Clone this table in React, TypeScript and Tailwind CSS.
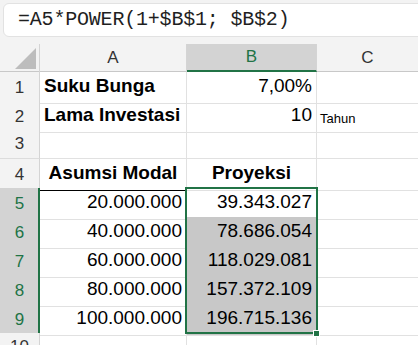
import React from "react";

const GREEN = "#217346";

const rows = [
  { n: 1, a: "Suku Bunga", aBold: true, b: "7,00%", c: "" },
  { n: 2, a: "Lama Investasi", aBold: true, b: "10", c: "Tahun" },
  { n: 3, a: "", b: "", c: "" },
  { n: 4, a: "Asumsi Modal", aBold: true, aCenter: true, b: "Proyeksi", bBold: true, bCenter: true, c: "" },
  { n: 5, a: "20.000.000", b: "39.343.027", c: "" },
  { n: 6, a: "40.000.000", b: "78.686.054", c: "", fill: true },
  { n: 7, a: "60.000.000", b: "118.029.081", c: "", fill: true },
  { n: 8, a: "80.000.000", b: "157.372.109", c: "", fill: true },
  { n: 9, a: "100.000.000", b: "196.715.136", c: "", fill: true },
  { n: 10, a: "", b: "", c: "" },
];

const cellFont = { fontFamily: '"Liberation Sans", Arial, sans-serif' };

export default function App() {
  return (
    <div className="w-[418px] h-[345px] overflow-hidden bg-[#f3f3f3]" style={cellFont}>
      {/* formula bar */}
      <div className="h-[44px] pt-[3px] pl-[3px]">
        <div className="h-[34px] w-[430px] bg-white border border-[#e2e2e2] rounded-[6px] flex items-center pl-[14px]">
          <span
            className="text-[20px] text-[#1f1f1f] tracking-[-0.2px]"
            style={{ fontFamily: '"Liberation Mono", "DejaVu Sans Mono", monospace' }}
          >
            =A5*POWER(1+$B$1; $B$2)
          </span>
        </div>
      </div>

      <div className="relative bg-white">
        {/* column headers */}
        <div className="grid grid-cols-[40px_147px_130px_1fr] h-[28px] bg-[#f3f3f3] border-b border-[#c8c8c8]">
          <div className="border-r border-[#d4d4d4] flex items-end justify-end pr-[3px] pb-[3px]">
            <svg width="21" height="21" viewBox="0 0 21 21">
              <polygon points="21,0 21,21 0,21" fill="#bdbdbd" />
            </svg>
          </div>
          <div className="border-r border-[#d4d4d4] flex items-center justify-center text-[17px] text-[#333]">A</div>
          <div
            className="border-r border-[#d4d4d4] flex items-center justify-center text-[17px] bg-[#d3d3d3] border-b-2"
            style={{ color: GREEN, borderBottomColor: GREEN }}
          >
            B
          </div>
          <div className="flex items-center justify-center text-[17px] text-[#333]">C</div>
        </div>

        {rows.map((r) => {
          const sel = r.n >= 5 && r.n <= 9;
          return (
            <div key={r.n} className="grid grid-cols-[40px_147px_130px_1fr] h-[29px]">
              <div
                className={
                  "flex items-center justify-center text-[17px] border-b " +
                  (sel
                    ? "bg-[#d3d3d3] text-[#217346] border-[#c4c4c4] border-r-2 border-r-[#217346] pl-[1px]"
                    : "bg-[#f3f3f3] text-[#333] border-[#dcdcdc] border-r border-r-[#d4d4d4]")
                }
              >
                {r.n}
              </div>
              <div
                className={
                  "flex items-end pb-[2px] px-[4px] text-[19px] text-black border-r border-b border-[#e1e1e1] whitespace-nowrap " +
                  (r.aCenter ? "justify-center " : r.aBold ? "justify-start " : "justify-end ") +
                  (r.aBold ? "font-bold " : "") +
                  (r.n === 4 ? "border-b-black" : "")
                }
              >
                {r.a}
              </div>
              <div
                className={
                  "flex items-end pb-[2px] px-[4px] text-[19px] text-black border-r border-b border-[#e1e1e1] whitespace-nowrap " +
                  (r.bCenter ? "justify-center " : "justify-end ") +
                  (r.bBold ? "font-bold " : "") +
                  (r.fill ? "bg-[#c8c8c8]" : "")
                }
              >
                {r.b}
              </div>
              <div className="flex items-end pb-[3px] pl-[3px] text-[13px] text-black border-b border-[#e1e1e1]">
                {r.c}
              </div>
            </div>
          );
        })}

        {/* selection B5:B9 */}
        <div
          className="absolute left-[185px] top-[143px] w-[133px] h-[147px] border-2 pointer-events-none"
          style={{ borderColor: GREEN }}
        />
        <div
          className="absolute left-[313px] top-[286px] w-[7px] h-[7px] border border-white"
          style={{ backgroundColor: GREEN }}
        />
      </div>
    </div>
  );
}
